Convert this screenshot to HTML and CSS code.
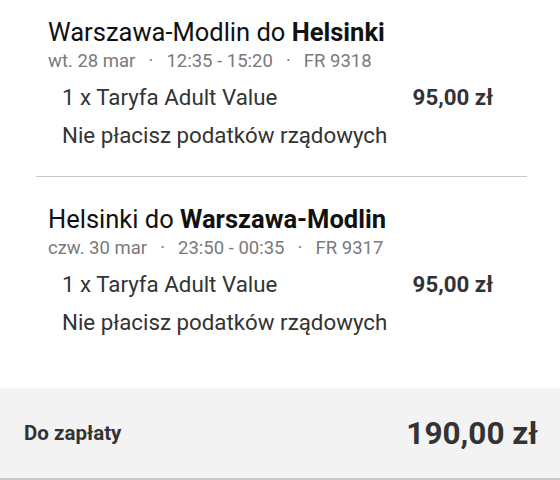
FILE: index.html
```html
<!DOCTYPE html>
<html lang="pl">
<head>
    <meta charset="UTF-8">
    <meta name="viewport" content="width=device-width, initial-scale=1.0">
    <title>Podsumowanie</title>
    <link rel="stylesheet" href="styles.css">
</head>
<body>
    <div class="summary">
        <div class="flight">
            <div class="flight-title">Warszawa-Modlin do <strong>Helsinki</strong></div>
            <div class="flight-info">wt. 28 mar <span class="dot">·</span> 12:35 - 15:20 <span class="dot">·</span> FR 9318</div>
            <div class="fare-row">
                <span>1 x Taryfa Adult Value</span>
                <span class="fare-price">95,00 zł</span>
            </div>
            <div class="fare-note">Nie płacisz podatków rządowych</div>
        </div>

        <div class="divider"></div>

        <div class="flight">
            <div class="flight-title">Helsinki do <strong>Warszawa-Modlin</strong></div>
            <div class="flight-info">czw. 30 mar <span class="dot">·</span> 23:50 - 00:35 <span class="dot">·</span> FR 9317</div>
            <div class="fare-row">
                <span>1 x Taryfa Adult Value</span>
                <span class="fare-price">95,00 zł</span>
            </div>
            <div class="fare-note">Nie płacisz podatków rządowych</div>
        </div>
    </div>

    <div class="total">
        <span class="total-label">Do zapłaty</span>
        <span class="total-price">190,00 zł</span>
    </div>
</body>
</html>
```

FILE: styles.css
```css
body {
    font-family: Roboto, 'Liberation Sans', sans-serif;
    background-color: #fff;
    margin: 0;
    padding: 0;
    width: 560px;
    height: 480px;
    overflow: hidden;
}
.summary {
    padding-top: 17px;
    height: 388px;
    box-sizing: border-box;
}
.flight {
    padding: 0 67px 0 48px;
}
.flight-title {
    font-size: 25.5px;
    line-height: 30px;
    color: #111;
    white-space: nowrap;
}
.flight-title strong {
    font-weight: 700;
}
.flight-info {
    font-size: 18.5px;
    line-height: 28px;
    color: #7a7a7a;
    white-space: nowrap;
}
.dot {
    margin: 0 8.5px;
}
.fare-row {
    display: flex;
    justify-content: space-between;
    padding-left: 14px;
    margin-top: 7px;
    font-size: 22.3px;
    line-height: 30px;
    color: #333;
}
.fare-price {
    font-weight: 700;
}
.fare-note {
    padding-left: 14px;
    margin-top: 8px;
    font-size: 22.3px;
    line-height: 30px;
    color: #333;
}
.divider {
    height: 1px;
    background-color: #c8c8c8;
    margin: 26px 33px 27px 36px;
}
.total {
    background-color: #f3f3f3;
    height: 90px;
    border-bottom: 2px solid #c8c8cc;
    display: flex;
    justify-content: space-between;
    align-items: center;
    padding: 0 22px 0 24px;
    color: #333;
}
.total-label {
    font-size: 20.5px;
    font-weight: 700;
}
.total-price {
    font-size: 31.5px;
    font-weight: 700;
}
```
